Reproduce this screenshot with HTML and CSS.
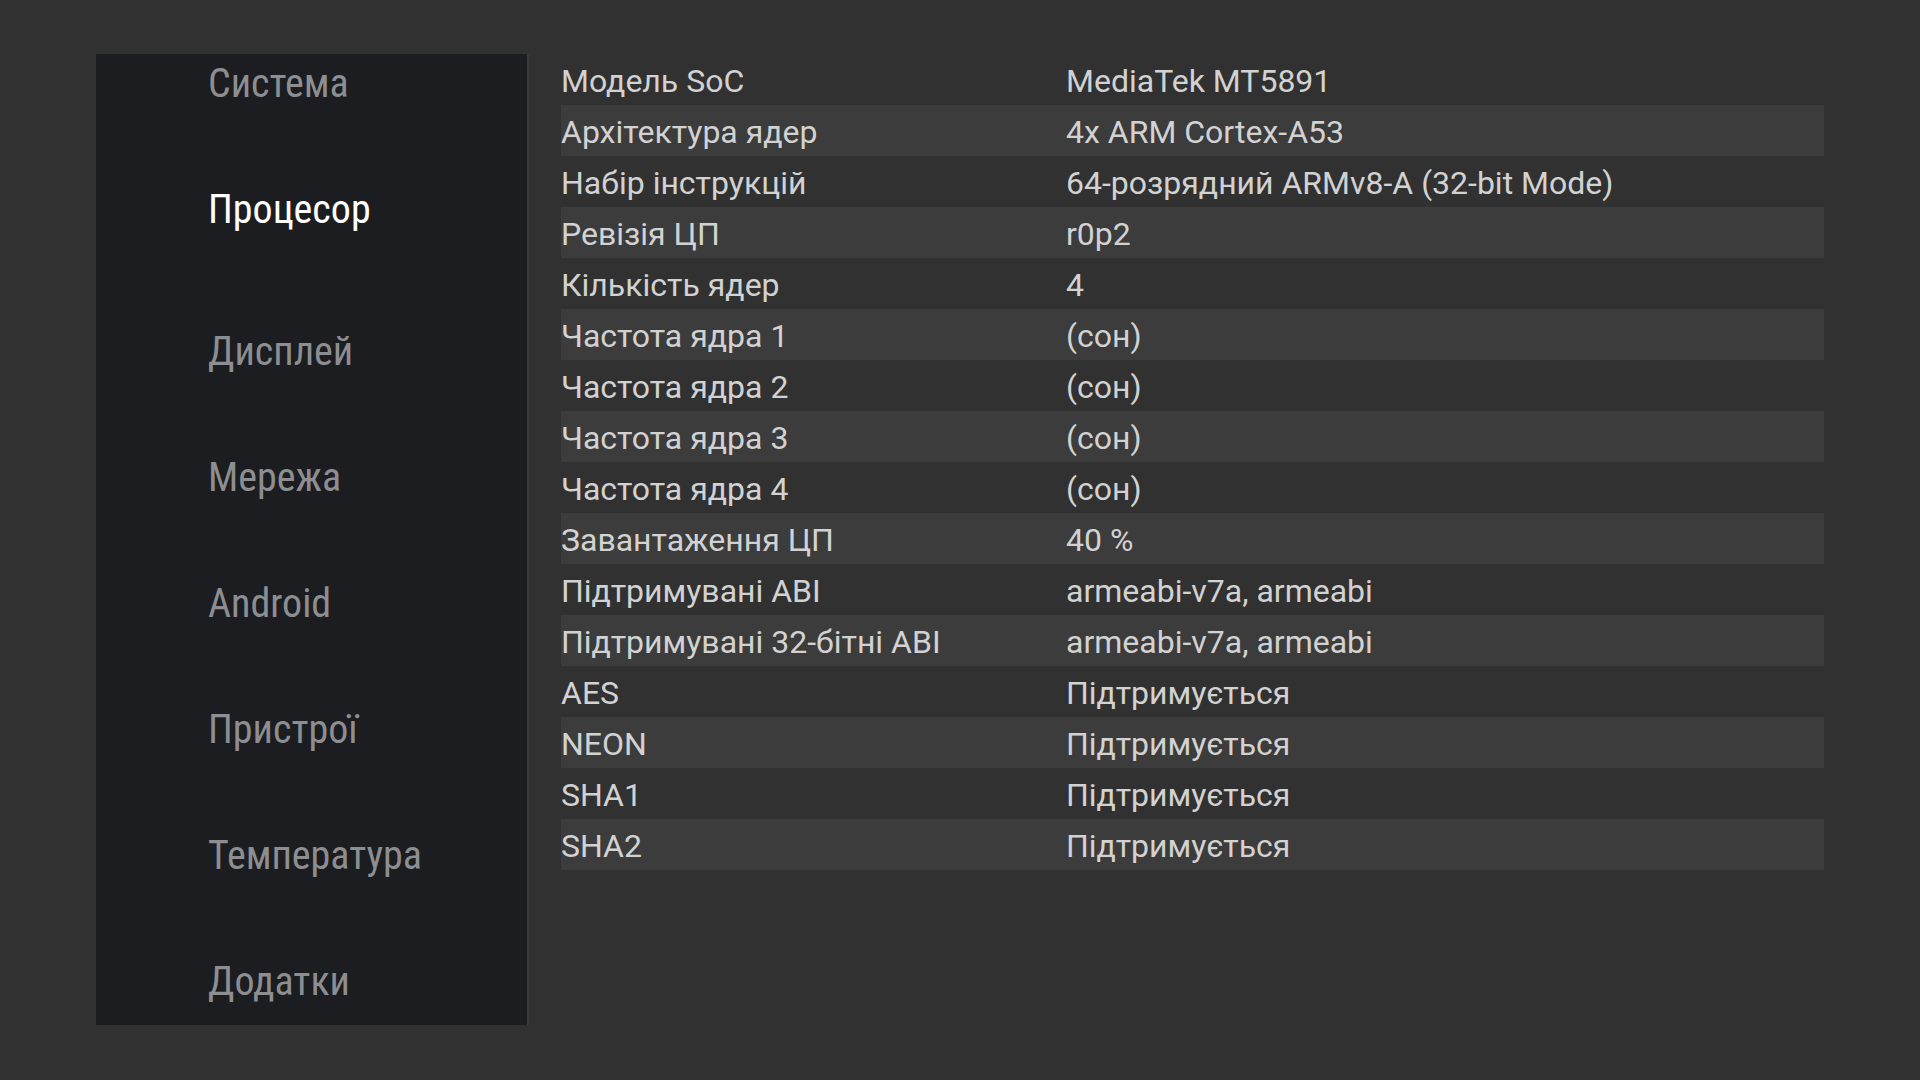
FILE: index.html
```html
<!DOCTYPE html>
<html lang="uk">
<head>
<meta charset="utf-8">
<title>CPU</title>
<link rel="stylesheet" href="styles.css">
</head>
<body>
<div class="screen">
  <nav class="sidebar">
    <div class="nav-item">Система</div>
    <div class="nav-item nav-item--active">Процесор</div>
    <div class="nav-item">Дисплей</div>
    <div class="nav-item">Мережа</div>
    <div class="nav-item">Android</div>
    <div class="nav-item">Пристрої</div>
    <div class="nav-item">Температура</div>
    <div class="nav-item">Додатки</div>
  </nav>
  <div class="table">
    <div class="row"><div class="label">Модель SoC</div><div class="value">MediaTek MT5891</div></div>
    <div class="row"><div class="label">Архітектура ядер</div><div class="value">4x ARM Cortex-A53</div></div>
    <div class="row"><div class="label">Набір інструкцій</div><div class="value">64-розрядний ARMv8-A (32-bit Mode)</div></div>
    <div class="row"><div class="label">Ревізія ЦП</div><div class="value">r0p2</div></div>
    <div class="row"><div class="label">Кількість ядер</div><div class="value">4</div></div>
    <div class="row"><div class="label">Частота ядра 1</div><div class="value">(сон)</div></div>
    <div class="row"><div class="label">Частота ядра 2</div><div class="value">(сон)</div></div>
    <div class="row"><div class="label">Частота ядра 3</div><div class="value">(сон)</div></div>
    <div class="row"><div class="label">Частота ядра 4</div><div class="value">(сон)</div></div>
    <div class="row"><div class="label">Завантаження ЦП</div><div class="value">40 %</div></div>
    <div class="row"><div class="label">Підтримувані ABI</div><div class="value">armeabi-v7a, armeabi</div></div>
    <div class="row"><div class="label">Підтримувані 32-бітні ABI</div><div class="value">armeabi-v7a, armeabi</div></div>
    <div class="row"><div class="label">AES</div><div class="value">Підтримується</div></div>
    <div class="row"><div class="label">NEON</div><div class="value">Підтримується</div></div>
    <div class="row"><div class="label">SHA1</div><div class="value">Підтримується</div></div>
    <div class="row"><div class="label">SHA2</div><div class="value">Підтримується</div></div>
  </div>
</div>
</body>
</html>
```
FILE: styles.css
```css
html, body {
  margin: 0;
  padding: 0;
}
body {
  background: #313131;
  width: 1920px;
  height: 1080px;
  overflow: hidden;
  font-family: Roboto, "Noto Sans", sans-serif;
}
.screen {
  display: flex;
  align-items: flex-start;
  padding: 54px 0 0 96px;
  gap: 32px;
}
.sidebar {
  width: 431px;
  height: 971px;
  background: #1b1d20;
  border-right: 2px solid #3a3a3a;
  overflow: hidden;
  display: flex;
  flex-direction: column;
  flex-shrink: 0;
}
.nav-item {
  flex-shrink: 0;
  height: 126px;
  box-sizing: border-box;
  padding: 10px 0 0 112px;
  font-family: "Roboto Condensed", Roboto, sans-serif;
  font-stretch: condensed;
  font-size: 40px;
  line-height: 40px;
  color: #8d8e91;
}
.nav-item--active {
  color: #ffffff;
  height: 142px;
}
.table {
  width: 1263px;
  display: flex;
  flex-direction: column;
}
.row {
  display: flex;
  height: 51px;
  align-items: center;
  font-size: 32px;
  line-height: 38px;
  color: #d2d2d2;
}
.row:nth-child(even) {
  background: #3c3c3c;
}
.label {
  width: 505px;
  flex-shrink: 0;
  padding-top: 2px;
}
.value {
  flex: 1;
  padding-top: 2px;
}
```
